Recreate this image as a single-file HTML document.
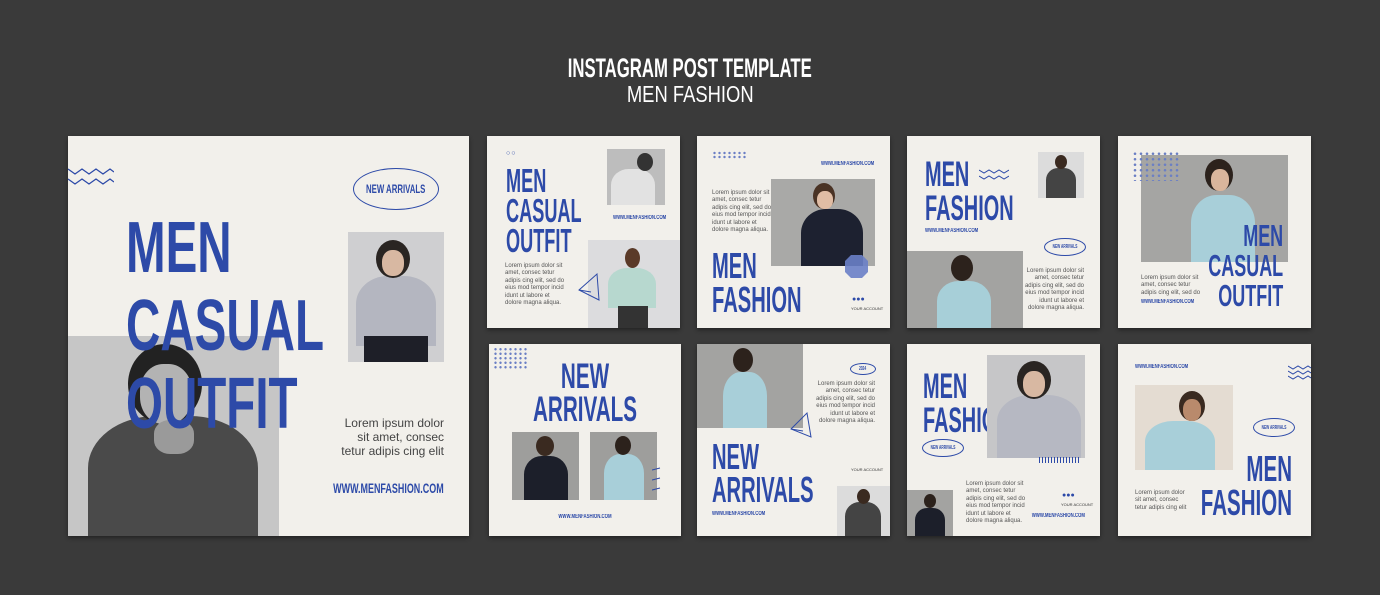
<!DOCTYPE html>
<html><head><meta charset="utf-8"><style>
*{margin:0;padding:0;box-sizing:border-box}
body{width:1380px;height:595px;background:#3a3a3a;position:relative;overflow:hidden;font-family:"Liberation Sans",sans-serif}
.a{position:absolute}
.card{position:absolute;background:#f2f0eb;overflow:hidden;box-shadow:0 2px 4px rgba(0,0,0,.4)}
.h{position:absolute;font-family:"Liberation Sans",sans-serif;font-weight:bold;color:#2d4aa8;white-space:nowrap;transform-origin:0 0}
.r{transform-origin:100% 0;text-align:right}
.c{transform-origin:50% 0;text-align:center}
.p{position:absolute;font-size:6px;line-height:7.4px;color:#555;white-space:nowrap}
.u{position:absolute;font-family:"Liberation Sans",sans-serif;font-weight:bold;color:#2d4aa8;font-size:7px;white-space:nowrap;transform:scaleX(.72);transform-origin:0 0}
.ur{transform-origin:100% 0}
.ph{position:absolute;overflow:hidden}
.hd{position:absolute;border-radius:50%;background:#2a2522}
.bd{position:absolute;border-radius:40% 40% 0 0}
.el{position:absolute;border:1.5px solid #2d4aa8;border-radius:50%;font-family:"Liberation Sans",sans-serif;font-weight:bold;color:#2d4aa8;display:flex;align-items:center;justify-content:center;white-space:nowrap}
.el span{display:inline-block;transform:scaleX(.65)}
</style></head><body>

<div class="a" style="left:0;top:55px;width:1380px;text-align:center"><span style="display:inline-block;font-weight:bold;font-size:27px;line-height:27px;color:#fff;transform:scaleX(.62)">INSTAGRAM POST TEMPLATE</span></div>
<div class="a" style="left:0;top:83px;width:1380px;text-align:center"><span style="display:inline-block;font-size:23px;line-height:23px;color:#fff;transform:scaleX(.8)">MEN FASHION</span></div>

<!-- BIG CARD -->
<div class="card" style="left:68px;top:136px;width:401px;height:400px">
 <svg class="a" style="left:0;top:30px" width="46" height="20"><polyline points="0,3 7,8 14,3 21,8 28,3 35,8 42,3 46,6" fill="none" stroke="#2d4aa8" stroke-width="1.3"/><polyline points="0,13 7,18 14,13 21,18 28,13 35,18 42,13 46,16" fill="none" stroke="#2d4aa8" stroke-width="1.3"/></svg>
 <div class="el" style="left:285px;top:32px;width:86px;height:42px;font-size:12px"><span>NEW ARRIVALS</span></div>
 <div class="ph" style="left:280px;top:96px;width:96px;height:130px;background:#cfcfd1">
  <div class="bd" style="left:8px;top:44px;width:80px;height:70px;background:#b4b6c0"></div>
  <div class="a" style="left:16px;top:104px;width:64px;height:26px;background:#1e1f28"></div>
  <div class="hd" style="left:28px;top:8px;width:34px;height:38px"></div>
  <div class="a" style="left:34px;top:18px;width:22px;height:26px;border-radius:45%;background:#d8b8a2"></div>
 </div>
 <div class="ph" style="left:0;top:200px;width:211px;height:200px;background:#c6c6c6">
  <div class="bd" style="left:20px;top:80px;width:170px;height:130px;background:#4a4a4a"></div>
  <div class="hd" style="left:60px;top:8px;width:74px;height:80px;background:#222"></div>
  <div class="a" style="left:72px;top:28px;width:52px;height:60px;border-radius:45%;background:#b3b3b3"></div>
  <div class="a" style="left:86px;top:84px;width:40px;height:34px;border-radius:40%;background:#9a9a9a"></div>
 </div>
 <div class="h" style="left:58px;top:73px;font-size:72px;line-height:78px;transform:scaleX(.66)">MEN<br>CASUAL<br>OUTFIT</div>
 <div class="p" style="right:25px;top:280px;text-align:right;font-size:12px;line-height:14px;color:#444">Lorem ipsum dolor<br>sit amet, consec<br>tetur adipis cing elit</div>
 <div class="u ur" style="right:25px;top:344px;font-size:14px;transform:scaleX(.64)">WWW.MENFASHION.COM</div>
</div>

<!-- CARD 1 -->
<div class="card" style="left:487px;top:136px;width:193px;height:192px">
 <div class="a" style="left:19px;top:14px;font-size:7px;color:#2d4aa8;letter-spacing:1px">○○</div>
 <div class="h" style="left:19px;top:30px;font-size:33px;line-height:30px;transform:scaleX(.55)">MEN<br>CASUAL<br>OUTFIT</div>
 <div class="ph" style="left:120px;top:13px;width:58px;height:56px;background:#bdbdbd"><div class="bd" style="left:4px;top:20px;width:44px;height:40px;background:#e2e2e2"></div><div class="hd" style="left:30px;top:4px;width:16px;height:18px;background:#333"></div></div>
 <div class="u" style="left:126px;top:79px;font-size:6px">WWW.MENFASHION.COM</div>
 <div class="ph" style="left:101px;top:104px;width:92px;height:88px;background:#dcdcde"><div class="bd" style="left:20px;top:28px;width:48px;height:40px;background:#b7d8cf"></div><div class="a" style="left:30px;top:66px;width:30px;height:24px;background:#333"></div><div class="hd" style="left:37px;top:8px;width:15px;height:20px;background:#5a3a28"></div></div>
 <svg class="a" style="left:90px;top:136px" width="24" height="30"><polygon points="2,18 20,2 22,28" fill="none" stroke="#2d4aa8" stroke-width="1"/><line x1="2" y1="18" x2="14" y2="20" stroke="#2d4aa8"/></svg>
 <div class="p" style="left:18px;top:127px">Lorem ipsum dolor sit<br>amet, consec tetur<br>adipis cing elit, sed do<br>eius mod tempor incid<br>idunt ut labore et<br>dolore magna aliqua.</div>
</div>

<!-- CARD 2 -->
<div class="card" style="left:697px;top:136px;width:193px;height:192px">
 <div class="a" style="left:15px;top:15px;width:36px;height:8px;background:radial-gradient(circle,#6b7fc4 1px,transparent 1.4px) 0 0/5px 4px"></div>
 <div class="u" style="left:124px;top:25px;font-size:6px">WWW.MENFASHION.COM</div>
 <div class="p" style="left:15px;top:54px">Lorem ipsum dolor sit<br>amet, consec tetur<br>adipis cing elit, sed do<br>eius mod tempor incid<br>idunt ut labore et<br>dolore magna aliqua.</div>
 <div class="ph" style="left:74px;top:43px;width:104px;height:87px;background:#a9a9a7"><div class="bd" style="left:30px;top:30px;width:62px;height:60px;background:#1d2130"></div><div class="hd" style="left:42px;top:4px;width:22px;height:26px;background:#4a3325"></div><div class="a" style="left:46px;top:12px;width:16px;height:18px;border-radius:45%;background:#e0bda5"></div></div>
 <svg class="a" style="left:147px;top:118px" width="25" height="25"><polygon points="7,1 18,1 24,7 24,18 18,24 7,24 1,18 1,7" fill="#6a7fc8" opacity=".9"/></svg>
 <div class="h" style="left:15px;top:113px;font-size:36px;line-height:34px;transform:scaleX(.56)">MEN<br>FASHION</div>
 <div class="a" style="left:155px;top:160px;color:#2d4aa8;font-size:7px">●●●</div>
 <div class="a" style="left:154px;top:170px;font-size:4px;color:#333">YOUR ACCOUNT</div>
</div>

<!-- CARD 3 -->
<div class="card" style="left:907px;top:136px;width:193px;height:192px">
 <div class="h" style="left:18px;top:22px;font-size:35px;line-height:34px;transform:scaleX(.57)">MEN<br>FASHION</div>
 <svg class="a" style="left:72px;top:32px" width="30" height="12"><polyline points="0,2 5,5 10,2 15,5 20,2 25,5 30,2" fill="none" stroke="#2d4aa8"/><polyline points="0,8 5,11 10,8 15,11 20,8 25,11 30,8" fill="none" stroke="#2d4aa8"/></svg>
 <div class="ph" style="left:131px;top:16px;width:46px;height:46px;background:#dcdcdc"><div class="bd" style="left:8px;top:16px;width:30px;height:30px;background:#444"></div><div class="hd" style="left:17px;top:3px;width:12px;height:14px;background:#3a2a20"></div></div>
 <div class="u" style="left:18px;top:92px;font-size:6px">WWW.MENFASHION.COM</div>
 <div class="el" style="left:137px;top:102px;width:42px;height:18px;font-size:5px;border-width:1px"><span>NEW ARRIVALS</span></div>
 <div class="ph" style="left:0;top:115px;width:116px;height:77px;background:#a3a3a1"><div class="bd" style="left:30px;top:30px;width:54px;height:50px;background:#a7cfd8"></div><div class="hd" style="left:44px;top:4px;width:22px;height:26px;background:#2c221c"></div></div>
 <div class="p" style="right:16px;top:132px;text-align:right">Lorem ipsum dolor sit<br>amet, consec tetur<br>adipis cing elit, sed do<br>eius mod tempor incid<br>idunt ut labore et<br>dolore magna aliqua.</div>
</div>

<!-- CARD 4 -->
<div class="card" style="left:1118px;top:136px;width:193px;height:192px">
 <div class="ph" style="left:23px;top:19px;width:147px;height:107px;background:#a5a5a3"><div class="bd" style="left:50px;top:40px;width:64px;height:70px;background:#a8cfd9"></div><div class="hd" style="left:64px;top:4px;width:28px;height:32px;background:#2c221c"></div><div class="a" style="left:70px;top:14px;width:18px;height:22px;border-radius:45%;background:#d9b59c"></div></div>
 <div class="a" style="left:14px;top:15px;width:48px;height:30px;background:radial-gradient(circle,#6b7fc4 1.1px,transparent 1.5px) 0 0/6px 5.5px"></div>
 <div class="h r" style="right:28px;top:85px;font-size:31px;line-height:30px;transform:scaleX(.58)">MEN<br>CASUAL<br>OUTFIT</div>
 <div class="p" style="left:23px;top:139px">Lorem ipsum dolor sit<br>amet, consec tetur<br>adipis cing elit, sed do</div>
 <div class="u" style="left:23px;top:163px;font-size:6px">WWW.MENFASHION.COM</div>
</div>

<!-- CARD 5 -->
<div class="card" style="left:489px;top:344px;width:192px;height:192px">
 <div class="a" style="left:4px;top:3px;width:34px;height:22px;background:radial-gradient(circle,#6b7fc4 1px,transparent 1.4px) 0 0/5px 4.5px"></div>
 <div class="h c" style="left:0;width:192px;top:16px;font-size:35px;line-height:33px;transform:scaleX(.59)">NEW<br>ARRIVALS</div>
 <div class="ph" style="left:23px;top:88px;width:67px;height:68px;background:#9e9e9c"><div class="bd" style="left:12px;top:24px;width:44px;height:46px;background:#1c1f2a"></div><div class="hd" style="left:24px;top:4px;width:18px;height:20px;background:#3a2a20"></div></div>
 <div class="ph" style="left:101px;top:88px;width:67px;height:68px;background:#9e9e9c"><div class="bd" style="left:14px;top:22px;width:40px;height:48px;background:#a8cfd9"></div><div class="hd" style="left:25px;top:4px;width:16px;height:19px;background:#2c221c"></div></div>
 <svg class="a" style="left:163px;top:122px" width="10" height="34"><path d="M0 4L8 2M0 14L8 12M0 24L8 22" stroke="#2d4aa8" fill="none"/></svg>
 <div class="u" style="left:0;width:192px;text-align:center;top:170px;font-size:6px;transform-origin:50% 0">WWW.MENFASHION.COM</div>
</div>

<!-- CARD 6 -->
<div class="card" style="left:697px;top:344px;width:193px;height:192px">
 <div class="ph" style="left:0;top:0;width:106px;height:84px;background:#a3a3a1"><div class="bd" style="left:26px;top:28px;width:44px;height:60px;background:#a8cfd9"></div><div class="hd" style="left:36px;top:4px;width:20px;height:24px;background:#2c221c"></div></div>
 <div class="el" style="left:153px;top:19px;width:26px;height:12px;font-size:5px;border-width:1px"><span>2024</span></div>
 <div class="p" style="right:15px;top:37px;text-align:right">Lorem ipsum dolor sit<br>amet, consec tetur<br>adipis cing elit, sed do<br>eius mod tempor incid<br>idunt ut labore et<br>dolore magna aliqua.</div>
 <svg class="a" style="left:92px;top:67px" width="24" height="28"><polygon points="2,18 18,2 22,26" fill="none" stroke="#2d4aa8"/><line x1="2" y1="18" x2="14" y2="20" stroke="#2d4aa8"/></svg>
 <div class="a" style="left:154px;top:123px;font-size:4px;color:#333">YOUR ACCOUNT</div>
 <div class="h" style="left:15px;top:96px;font-size:36px;line-height:33px;transform:scaleX(.56)">NEW<br>ARRIVALS</div>
 <div class="u" style="left:15px;top:167px;font-size:6px">WWW.MENFASHION.COM</div>
 <div class="ph" style="left:140px;top:142px;width:53px;height:50px;background:#dcdcdc"><div class="bd" style="left:8px;top:16px;width:36px;height:36px;background:#444"></div><div class="hd" style="left:20px;top:3px;width:13px;height:15px;background:#3a2a20"></div></div>
</div>

<!-- CARD 7 -->
<div class="card" style="left:907px;top:344px;width:193px;height:192px">
 <div class="h" style="left:16px;top:26px;font-size:35px;line-height:34px;transform:scaleX(.57)">MEN<br>FASHION</div>
 <div class="ph" style="left:80px;top:11px;width:98px;height:103px;background:#c6c6c8"><div class="bd" style="left:10px;top:40px;width:84px;height:66px;background:#b6b8c2"></div><div class="hd" style="left:30px;top:6px;width:34px;height:38px;background:#2a2522"></div><div class="a" style="left:36px;top:16px;width:22px;height:26px;border-radius:45%;background:#d8b8a2"></div></div>
 <div class="a" style="left:132px;top:113px;width:40px;height:6px;background:repeating-linear-gradient(90deg,#2d4aa8 0 1px,transparent 1px 3px)"></div>
 <div class="el" style="left:15px;top:95px;width:42px;height:18px;font-size:5px;border-width:1px"><span>NEW ARRIVALS</span></div>
 <div class="p" style="left:59px;top:137px">Lorem ipsum dolor sit<br>amet, consec tetur<br>adipis cing elit, sed do<br>eius mod tempor incid<br>idunt ut labore et<br>dolore magna aliqua.</div>
 <div class="ph" style="left:0;top:146px;width:46px;height:46px;background:#a3a3a1"><div class="bd" style="left:8px;top:18px;width:30px;height:30px;background:#1c1f2a"></div><div class="hd" style="left:17px;top:4px;width:12px;height:14px;background:#2c221c"></div></div>
 <div class="a" style="left:155px;top:148px;color:#2d4aa8;font-size:7px">●●●</div>
 <div class="a" style="left:154px;top:158px;font-size:4px;color:#333">YOUR ACCOUNT</div>
 <div class="u ur" style="right:15px;top:169px;font-size:6px">WWW.MENFASHION.COM</div>
</div>

<!-- CARD 8 -->
<div class="card" style="left:1118px;top:344px;width:193px;height:192px">
 <div class="u" style="left:17px;top:20px;font-size:6px">WWW.MENFASHION.COM</div>
 <svg class="a" style="left:170px;top:20px" width="23" height="16"><polyline points="0,2 5,5 10,2 15,5 20,2 23,4" fill="none" stroke="#2d4aa8"/><polyline points="0,7 5,10 10,7 15,10 20,7 23,9" fill="none" stroke="#2d4aa8"/><polyline points="0,12 5,15 10,12 15,15 20,12 23,14" fill="none" stroke="#2d4aa8"/></svg>
 <div class="ph" style="left:17px;top:41px;width:98px;height:85px;background:#e4dcd2"><div class="bd" style="left:10px;top:36px;width:70px;height:52px;background:#a8cfd9"></div><div class="hd" style="left:44px;top:6px;width:26px;height:30px;background:#3a2a20"></div><div class="a" style="left:48px;top:14px;width:18px;height:22px;border-radius:45%;background:#b98a6c"></div></div>
 <div class="el" style="left:135px;top:74px;width:42px;height:19px;font-size:5px;border-width:1px"><span>NEW ARRIVALS</span></div>
 <div class="h r" style="right:19px;top:108px;font-size:36px;line-height:34px;transform:scaleX(.57)">MEN<br>FASHION</div>
 <div class="p" style="left:17px;top:146px">Lorem ipsum dolor<br>sit amet, consec<br>tetur adipis cing elit</div>
</div>

</body></html>
